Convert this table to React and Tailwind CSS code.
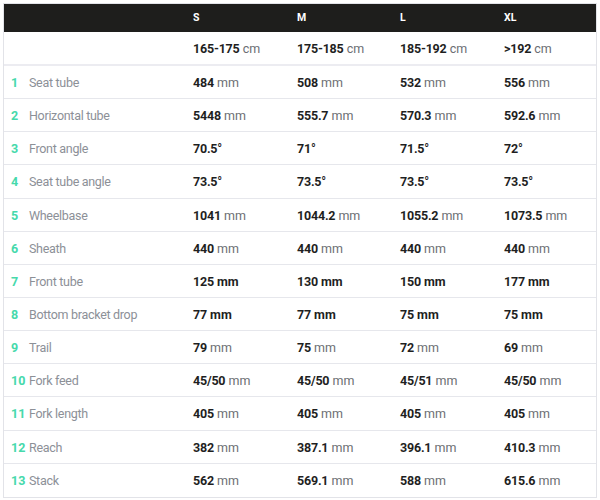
import React from "react";

const sizes = ["S", "M", "L", "XL"];
const heights = ["165-175", "175-185", "185-192", ">192"];

// [label, values, unit, boldUnit]
const rows = [
  ["Seat tube", ["484", "508", "532", "556"], "mm"],
  ["Horizontal tube", ["5448", "555.7", "570.3", "592.6"], "mm"],
  ["Front angle", ["70.5°", "71°", "71.5°", "72°"], ""],
  ["Seat tube angle", ["73.5°", "73.5°", "73.5°", "73.5°"], ""],
  ["Wheelbase", ["1041", "1044.2", "1055.2", "1073.5"], "mm"],
  ["Sheath", ["440", "440", "440", "440"], "mm"],
  ["Front tube", ["125", "130", "150", "177"], "mm", true],
  ["Bottom bracket drop", ["77", "77", "75", "75"], "mm", true],
  ["Trail", ["79", "75", "72", "69"], "mm"],
  ["Fork feed", ["45/50", "45/50", "45/51", "45/50"], "mm"],
  ["Fork length", ["405", "405", "405", "405"], "mm"],
  ["Reach", ["382", "387.1", "396.1", "410.3"], "mm"],
  ["Stack", ["562", "569.1", "588", "615.6"], "mm"],
];

const font = { fontFamily: "Roboto, 'Liberation Sans', sans-serif" };

function Value({ value, unit, boldUnit }) {
  return (
    <span className="text-[#1f1f1f]">
      <span className="font-bold tracking-[-0.2px]">{value}</span>
      {unit && (
        <span className={boldUnit ? "font-bold" : "text-[#6b6e73]"}>
          {" "}
          {unit}
        </span>
      )}
    </span>
  );
}

export default function App() {
  return (
    <div className="w-[600px] h-[500px] bg-white pl-[3px] pt-[3px]" style={font}>
      <div className="w-[594px] border-x border-t border-[#e2e3e8] border-b">
        <div className="grid grid-cols-[179px_104px_103px_104px_1fr] h-[28px] items-center bg-[#1e1e1c] text-white text-[10.5px] font-bold">
          <div />
          {sizes.map(s => (
            <div key={s} className="pl-[10px]">{s}</div>
          ))}
        </div>
        <div className="grid grid-cols-[179px_104px_103px_104px_1fr] h-[34px] items-center pt-[2px] border-b-2 border-[#ececf1] text-[12.5px] leading-[18px]">
          <div />
          {heights.map(h => (
            <div key={h} className="pl-[10px]">
              <Value value={h} unit="cm" />
            </div>
          ))}
        </div>
        {rows.map(([label, values, unit, boldUnit], i) => (
          <div
            key={label}
            className={
              "grid grid-cols-[179px_104px_103px_104px_1fr] h-[33.15px] items-center pt-[2px] text-[12.5px] leading-[18px]" +
              (i < rows.length - 1 ? " border-b border-[#e6e7ec]" : "")
            }
          >
            <div className="flex items-center pl-[7px]">
              <span className="w-[18px] font-bold text-[#46d9ab]">{i + 1}</span>
              <span className="text-[#8c9097] tracking-[-0.3px]">{label}</span>
            </div>
            {values.map((v, j) => (
              <div key={j} className="pl-[10px]">
                <Value value={v} unit={unit} boldUnit={boldUnit} />
              </div>
            ))}
          </div>
        ))}
      </div>
    </div>
  );
}
